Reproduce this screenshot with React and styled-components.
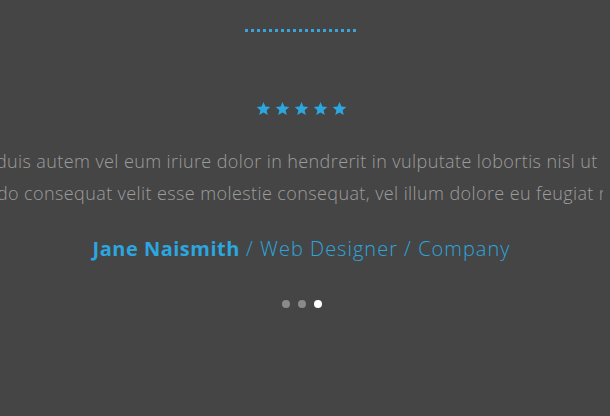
import React from "react";
import styled, { createGlobalStyle } from "styled-components";

const GlobalStyle = createGlobalStyle`
  html, body {
    margin: 0;
    padding: 0;
    background: #454545;
  }
`;

const quoteLines = [
  "amet, duis autem vel eum iriure dolor in hendrerit in vulputate lobortis nisl ut aliquip",
  "commodo consequat velit esse molestie consequat, vel illum dolore eu feugiat nulla fac",
];

function Star() {
  return (
    <svg width="15" height="15" viewBox="0 0 24 24">
      <path
        d="M12 1.5l3.1 7.2 7.8.7-5.9 5.2 1.8 7.7L12 18.2l-6.8 4.1 1.8-7.7-5.9-5.2 7.8-.7z"
        fill="#2ba6df"
      />
    </svg>
  );
}

export default function App() {
  const active = 2;
  return (
    <>
      <GlobalStyle />
      <Section>
        <Divider />
        <Stars>
          {[0, 1, 2, 3, 4].map((i) => (
            <Star key={i} />
          ))}
        </Stars>
        <Quote>
          {quoteLines.map((line, i) => (
            <QuoteLine key={i}>{line}</QuoteLine>
          ))}
        </Quote>
        <Author>
          <Name>Jane Naismith</Name> / Web Designer / Company
        </Author>
        <Pager>
          {[0, 1, 2].map((i) => (
            <PagerDot key={i} $active={i === active} />
          ))}
        </Pager>
      </Section>
    </>
  );
}

const Section = styled.section`
  height: 416px;
  background: #454545;
  display: flex;
  flex-direction: column;
  align-items: center;
  padding: 29px 7px 0 0;
  box-sizing: border-box;
  overflow: hidden;
  font-family: "Open Sans", "DejaVu Sans", sans-serif;
`;

const Divider = styled.div`
  width: 114px;
  height: 3px;
  background: repeating-linear-gradient(
    to right,
    #3aa3d8 0 3px,
    transparent 3px 6px
  );
`;

const Stars = styled.div`
  display: flex;
  gap: 4px;
  margin-top: 69px;
`;

const Quote = styled.div`
  width: 100%;
  margin-top: 29px;
  display: flex;
  flex-direction: column;
  align-items: center;
  overflow: hidden;
`;

const QuoteLine = styled.div`
  white-space: nowrap;
  font-size: 18px;
  font-weight: 300;
  line-height: 32px;
  color: #9d9d9d;
  letter-spacing: 0.4px;
`;

const Author = styled.div`
  margin-top: 25px;
  font-size: 20px;
  font-weight: 300;
  color: #2ba6df;
  line-height: 30px;
  letter-spacing: 1px;
`;

const Name = styled.span`
  font-weight: 700;
  letter-spacing: 0.5px;
`;

const Pager = styled.div`
  display: flex;
  gap: 8px;
  margin-top: 36px;
`;

const PagerDot = styled.span`
  width: 8px;
  height: 8px;
  border-radius: 50%;
  background: ${(p) => (p.$active ? "#ffffff" : "#8a8a8a")};
`;
